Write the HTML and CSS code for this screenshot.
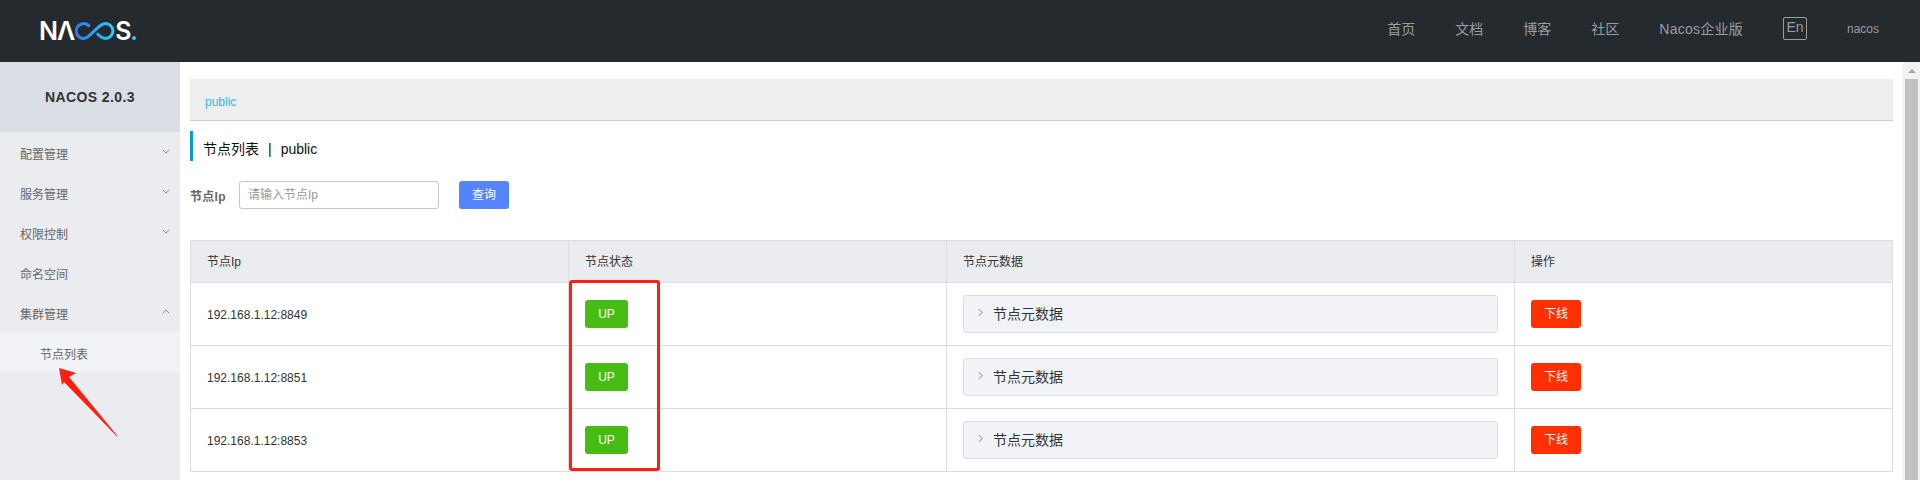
FILE: index.html
```html
<!DOCTYPE html>
<html lang="zh">
<head>
    <meta charset="UTF-8">
    <meta name="viewport" content="width=device-width, initial-scale=1.0">
    <title>Nacos</title>
    <link rel="stylesheet" href="styles.css">
</head>
<body>

    <header class="top-bar">
        <div class="logo">
            <span class="logo-n">N</span><span class="logo-a">Λ</span>
            <svg class="logo-loop" viewBox="0 0 40 18">
                <defs>
                    <linearGradient id="loop-color" x1="0" y1="0" x2="1" y2="0">
                        <stop offset="0" stop-color="#2f78ee"></stop>
                        <stop offset="1" stop-color="#25d0f5"></stop>
                    </linearGradient>
                </defs>
                <path d="M14.5 4.6A7.4 7.4 0 1 0 9 16.4C15 16.4 23 1.6 30.5 1.6A7.4 7.4 0 0 1 30.5 16.4C26.5 16.4 24 13.5 22 11.3" fill="none" stroke="url(#loop-color)" stroke-width="3"></path>
            </svg>
            <span class="logo-s">S</span><span class="logo-dot"></span>
        </div>
        <nav class="top-nav">
            <a class="nav-link">首页</a>
            <a class="nav-link">文档</a>
            <a class="nav-link">博客</a>
            <a class="nav-link">社区</a>
            <a class="nav-link nav-link-wide">Nacos企业版</a>
            <span class="lang-btn">En</span>
            <span class="user-name">nacos</span>
        </nav>
    </header>

    <div class="page-body">
        <aside class="side-nav">
            <div class="side-title">NACOS 2.0.3</div>
            <div class="side-item">配置管理
                <svg class="side-arrow" viewBox="0 0 10 6"><path d="M1 1l4 4 4-4"></path></svg>
            </div>
            <div class="side-item">服务管理
                <svg class="side-arrow" viewBox="0 0 10 6"><path d="M1 1l4 4 4-4"></path></svg>
            </div>
            <div class="side-item">权限控制
                <svg class="side-arrow" viewBox="0 0 10 6"><path d="M1 1l4 4 4-4"></path></svg>
            </div>
            <div class="side-item">命名空间</div>
            <div class="side-item">集群管理
                <svg class="side-arrow" viewBox="0 0 10 6"><path d="M1 5l4-4 4 4"></path></svg>
            </div>
            <div class="side-sub">节点列表</div>
        </aside>

        <main class="content">
            <div class="crumb-bar"><a class="crumb-link">public</a></div>
            <h1 class="page-title">节点列表<span class="title-sep">|</span>public</h1>

            <form class="search-form">
                <label class="search-label">节点Ip</label>
                <input class="search-input" type="text" placeholder="请输入节点Ip">
                <button class="btn btn-query" type="button">查询</button>
            </form>

            <table class="node-table">
                <thead>
                    <tr>
                        <th>节点Ip</th>
                        <th>节点状态</th>
                        <th>节点元数据</th>
                        <th>操作</th>
                    </tr>
                </thead>
                <tbody>
                    <tr>
                        <td class="ip-cell">192.168.1.12:8849</td>
                        <td><span class="btn btn-up">UP</span></td>
                        <td>
                            <div class="meta-panel">
                                <svg class="meta-arrow" viewBox="0 0 6 10"><path d="M1 1l4 4-4 4"></path></svg>节点元数据
                            </div>
                        </td>
                        <td><span class="btn btn-off">下线</span></td>
                    </tr>
                    <tr>
                        <td class="ip-cell">192.168.1.12:8851</td>
                        <td><span class="btn btn-up">UP</span></td>
                        <td>
                            <div class="meta-panel">
                                <svg class="meta-arrow" viewBox="0 0 6 10"><path d="M1 1l4 4-4 4"></path></svg>节点元数据
                            </div>
                        </td>
                        <td><span class="btn btn-off">下线</span></td>
                    </tr>
                    <tr>
                        <td class="ip-cell">192.168.1.12:8853</td>
                        <td><span class="btn btn-up">UP</span></td>
                        <td>
                            <div class="meta-panel">
                                <svg class="meta-arrow" viewBox="0 0 6 10"><path d="M1 1l4 4-4 4"></path></svg>节点元数据
                            </div>
                        </td>
                        <td><span class="btn btn-off">下线</span></td>
                    </tr>
                </tbody>
            </table>
        </main>

        <div class="scroll-track">
            <div class="scroll-up"></div>
            <div class="scroll-thumb"></div>
        </div>
    </div>

    <!-- annotations drawn on top of the screenshot -->
    <div class="mark-box"></div>
    <svg class="mark-arrow" viewBox="0 0 70 80">
        <path d="M1 1L18 6 11 10 59.5 69 59 69.5 6 15 4 18z"></path>
    </svg>

</body>
</html>
```

FILE: styles.css
```css
:root {
    --line: #dcdee3;
    --side-bg: #eaecf0;
    --head-bg: #252a2f;
}

* {
    margin: 0;
    padding: 0;
    box-sizing: border-box;
}

html, body {
    height: 480px;
    overflow: hidden;
}

body {
    position: relative;
    font-family: "Liberation Sans", "Noto Sans CJK SC", sans-serif;
    font-size: 12px;
    color: #333;
    background-color: #fff;
}

/* top bar */
.top-bar {
    height: 62px;
    background-color: var(--head-bg);
    display: flex;
    justify-content: space-between;
    align-items: center;
    padding: 0 40px 0 39px;
}

.logo {
    display: flex;
    align-items: center;
    font-family: "Inter", sans-serif;
    font-size: 25px;
    font-weight: 600;
    line-height: 24px;
    color: #fff;
}

.logo-n {
    width: 18px;
}

.logo-a {
    width: 18px;
    text-align: center;
}

.logo-loop {
    width: 40px;
    height: 18px;
}

.logo-s {
    width: 17px;
    text-align: center;
}

.logo-dot {
    width: 4px;
    height: 4px;
    margin-top: 14px;
    border-radius: 50%;
    background-color: #25d0f5;
}

.top-nav {
    display: flex;
    align-items: center;
    color: #9a9da0;
    font-size: 14px;
    padding-bottom: 6px;
}

.nav-link {
    margin-right: 40px;
}

.nav-link-wide {
    letter-spacing: 0.25px;
}

.lang-btn {
    width: 24px;
    height: 23px;
    border: 1px solid #9a9da0;
    border-radius: 2px;
    text-align: center;
    line-height: 19px;
    margin-right: 40px;
}

.user-name {
    font-size: 12px;
    padding-top: 2px;
    width: 33px;
}

/* layout */
.page-body {
    display: flex;
    height: 418px;
}

.side-nav {
    width: 180px;
    flex-shrink: 0;
    background-color: var(--side-bg);
}

.side-title {
    height: 70px;
    background-color: #d9dde4;
    color: #333;
    font-size: 14px;
    font-weight: 700;
    letter-spacing: 0.4px;
    text-align: center;
    line-height: 70px;
}

.side-item {
    height: 40px;
    padding-left: 20px;
    line-height: 46px;
    position: relative;
    color: #666;
}

.side-arrow {
    position: absolute;
    top: 17px;
    right: 10px;
    width: 8px;
    height: 5px;
    fill: none;
    stroke: #888;
    stroke-width: 1.25;
}

.side-sub {
    height: 40px;
    padding-left: 40px;
    line-height: 46px;
    background-color: #f2f3f7;
    color: #666;
}

.content {
    flex: 1;
    padding: 17px 10px 0;
    min-width: 0;
}

.crumb-bar {
    height: 42px;
    background-color: #eee;
    border-bottom: 1px solid #ccc;
    padding: 16px 15px 0;
}

.crumb-link {
    color: #2fbbdb;
}

.page-title {
    height: 30px;
    margin-top: 10px;
    border-left: 3px solid #0a9bd0;
    padding-left: 10px;
    font-size: 14px;
    font-weight: 400;
    line-height: 37px;
    color: #111;
}

.title-sep {
    margin: 0 9px;
}

.search-form {
    display: flex;
    align-items: center;
    margin-top: 20px;
}

.search-label {
    width: 49px;
    font-weight: 700;
    letter-spacing: 0.3px;
    color: #666;
}

.search-input {
    width: 200px;
    height: 28px;
    border: 1px solid #c4c6cf;
    border-radius: 3px;
    padding: 0 8px;
    font: inherit;
    outline: none;
}

.search-input::placeholder {
    color: #999;
}

.btn {
    display: inline-block;
    height: 28px;
    border: 0;
    border-radius: 3px;
    color: #fff;
    font: inherit;
    line-height: 28px;
    text-align: center;
}

.btn-query {
    width: 50px;
    margin-left: 20px;
    background-color: #5584ff;
}

.btn-up {
    width: 43px;
    background-color: #46bc15;
}

.btn-off {
    width: 50px;
    background-color: #ff3000;
}

/* table */
.node-table {
    width: 1703px;
    margin-top: 31px;
    border-collapse: collapse;
    table-layout: fixed;
}

.node-table th,
.node-table td {
    border: 1px solid var(--line);
    padding: 0 16px;
    text-align: left;
    font-weight: 400;
    vertical-align: middle;
}

.node-table th {
    height: 42px;
    padding-bottom: 2px;
    background-color: #ebecf0;
    color: #333;
}

.node-table td {
    height: 63px;
}

.node-table .ip-cell {
    padding-top: 2px;
}

.node-table th:nth-child(1) { width: 378px; }
.node-table th:nth-child(2) { width: 378px; }
.node-table th:nth-child(3) { width: 568px; }

.meta-panel {
    display: flex;
    align-items: center;
    height: 38px;
    background-color: #f2f3f7;
    border: 1px solid var(--line);
    border-radius: 3px;
    padding: 0 0 2px 14px;
    font-size: 14px;
}

.meta-arrow {
    width: 5px;
    height: 9px;
    margin-right: 10px;
    margin-top: -1px;
    fill: none;
    stroke: #777;
    stroke-width: 1.1;
}

/* fake browser scrollbar */
.scroll-track {
    width: 17px;
    flex-shrink: 0;
    background-color: #f1f1f1;
    padding: 0 2px;
}

.scroll-up {
    height: 17px;
    position: relative;
}

.scroll-up::before {
    content: "";
    position: absolute;
    left: 3px;
    top: 7px;
    border-left: 4px solid transparent;
    border-right: 4px solid transparent;
    border-bottom: 4px solid #a3a3a3;
}

.scroll-thumb {
    height: 401px;
    background-color: #c1c1c1;
}

/* red annotations */
.mark-box {
    position: absolute;
    left: 569px;
    top: 280px;
    width: 91px;
    height: 191px;
    border: 3px solid #ff1f10;
    border-radius: 3px;
}

.mark-arrow {
    position: absolute;
    left: 58px;
    top: 367px;
    width: 70px;
    height: 80px;
    fill: #ff1f10;
}
```
